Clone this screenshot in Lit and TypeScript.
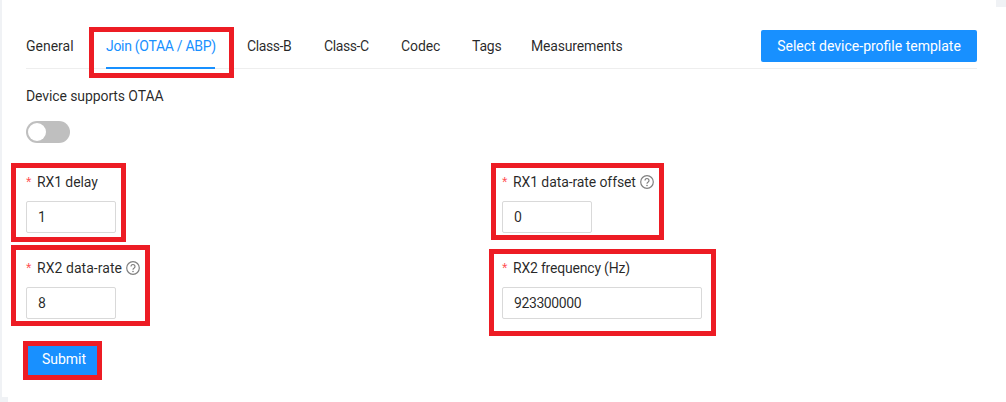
import { LitElement, html, css } from "lit";
import { customElement } from "lit/decorators.js";

const tabs: [string, number, number][] = [
  ["General", 48, 0],
  ["Join (OTAA / ABP)", 109, -0.3],
  ["Class-B", 45, -0.4],
  ["Class-C", 45, -0.4],
  ["Codec", 39, -0.1],
  ["Tags", 27, -0.2],
  ["Measurements", 91, -0.17],
];
const marks = [
  [89, 27, 145, 51],
  [11, 163, 115, 79],
  [11, 245, 139, 81],
  [23, 341, 79, 39],
  [491, 163, 173, 77],
  [489, 249, 227, 87],
];

@customElement("app-root")
export class AppRoot extends LitElement {
  static styles = css`
    :host { display: block; position: relative; width: 1006px; height: 402px; overflow: hidden; background: #fff;
      font-family: Roboto, sans-serif; font-size: 14px; color: rgba(0,0,0,.85); }
    .page { box-sizing: border-box; height: 402px; padding: 30px 29px 0 24px; border-left: 2px solid #f0f2f5; }
    .bar { box-sizing: border-box; display: flex; justify-content: space-between; height: 39px; border-bottom: 1px solid #eeeeee; }
    .tabs { display: flex; gap: 32px; height: 39px; }
    .tab { box-sizing: border-box; height: 32px; line-height: 32px; white-space: nowrap; }
    .tab.on { color: #1890ff; height: 39px; border-bottom: 2px solid #1890ff; }
    .btn { background: #1890ff; color: #fff; border: 0; border-radius: 2px; font: inherit; padding: 0; }
    .tpl { width: 216px; height: 32px; }
    .lbl { height: 22px; line-height: 22px; display: flex; align-items: center; gap: 4px; white-space: nowrap; }
    .otaa { margin-top: 16px; letter-spacing: -0.1px; }
    .switch { position: relative; width: 44px; height: 22px; border-radius: 11px; background: #bfbfbf; margin-top: 14px; }
    .knob { position: absolute; left: 2px; top: 2px; width: 18px; height: 18px; border-radius: 50%; background: #fff; }
    .grid { display: grid; grid-template-columns: 476px 1fr; margin-top: 28px; }
    .item { height: 86px; }
    .name { display: flex; }
    .req { color: #ff4d4f; width: 11px; font-family: "Liberation Sans", sans-serif; }
    .input { box-sizing: border-box; width: 90px; height: 32px; border: 1px solid #d9d9d9; border-radius: 2px; margin-top: 8px; padding: 0 11px; line-height: 30px; letter-spacing: -0.4px; }
    .input.wide { width: 200px; }
    svg { display: block; }
    .submit { display: block; width: 76px; height: 32px; }
    .mark { position: absolute; box-sizing: border-box; border: 5px solid #ed1c24; pointer-events: none; }
    .corner { position: absolute; background: #f0f2f5; }
    .corner.tr { right: 0; top: 0; width: 10px; height: 7px; }
    .corner.bl { left: 0; bottom: 0; width: 8px; height: 5px; }
  `;

  private help() {
    return html`<svg width="14" height="14" viewBox="0 0 14 14" fill="none" stroke="#808080">
      <circle cx="7" cy="7" r="6.3" stroke-width="1.2"></circle>
      <path d="M5 5.5a2 2 0 1 1 3.2 1.6c-.8.5-1.2.8-1.2 1.6" stroke-width="1.2"></path>
      <circle cx="7" cy="10.5" r=".8" fill="#808080" stroke="none"></circle>
    </svg>`;
  }

  private field(label: string, value: string, spacing = 0, help = false, wide = false) {
    return html`<div class="item">
      <div class="lbl"><span class="name" style="letter-spacing:${spacing}px"><span class="req">*</span>${label}</span>${help ? this.help() : ""}</div>
      <div class="input ${wide ? "wide" : ""}">${value}</div>
    </div>`;
  }

  render() {
    return html`<div class="page">
      <div class="bar">
        <div class="tabs">${tabs.map(([t, w, s], i) => html`<div class="tab ${i === 1 ? "on" : ""}" style="width:${w}px;letter-spacing:${s}px">${t}</div>`)}</div>
        <button class="btn tpl">Select device-profile template</button>
      </div>
      <div class="lbl otaa">Device supports OTAA</div>
      <div class="switch"><div class="knob"></div></div>
      <div class="grid">
        ${this.field("RX1 delay", "1", -0.1)}
        ${this.field("RX1 data-rate offset", "0", -0.1, true)}
        ${this.field("RX2 data-rate", "8", 0.05, true)}
        ${this.field("RX2 frequency (Hz)", "923300000", -0.2, false, true)}
      </div>
      <button class="btn submit">Submit</button>
    </div>
    <div class="corner tr"></div>
    <div class="corner bl"></div>
    ${marks.map(([x, y, w, h]) => html`<div class="mark" style="left:${x}px;top:${y}px;width:${w}px;height:${h}px"></div>`)}`;
  }
}
